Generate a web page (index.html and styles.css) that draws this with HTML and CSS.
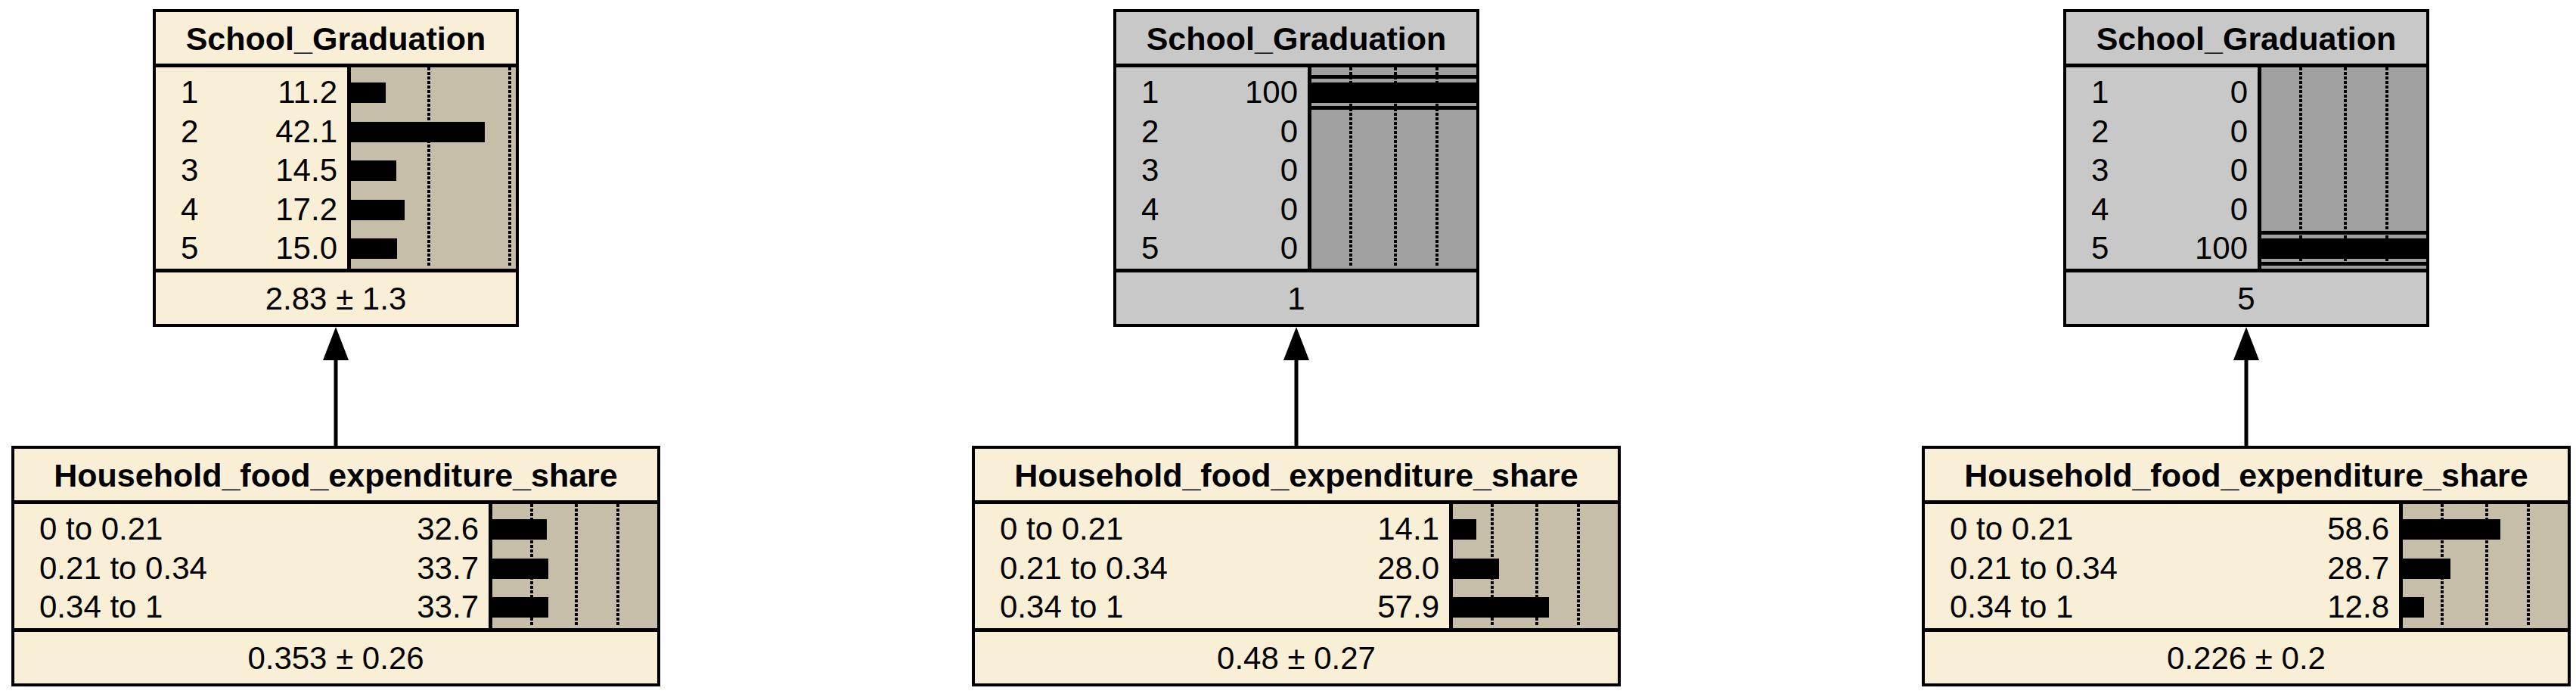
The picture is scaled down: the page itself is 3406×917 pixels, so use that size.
FILE: index.html
```html
<!DOCTYPE html>
<html lang="en">
<head>
<meta charset="utf-8">
<title>Bayesian network – School_Graduation</title>
<link rel="stylesheet" href="styles.css">
</head>
<body>
<div class="net">

  <div class="col col-1">
    <div class="node node-top cream">
      <div class="title">School_Graduation</div>
      <div class="body body-5">
        <div class="states">
          <div class="row"><span>1</span><span>11.2</span></div>
          <div class="row"><span>2</span><span>42.1</span></div>
          <div class="row"><span>3</span><span>14.5</span></div>
          <div class="row"><span>4</span><span>17.2</span></div>
          <div class="row"><span>5</span><span>15.0</span></div>
        </div>
        <div class="bars">
          <div class="tick tick-h1"></div>
          <div class="tick tick-h2"></div>
          <div class="bar-row"><div class="bar" style="width:46px"></div></div>
          <div class="bar-row"><div class="bar" style="width:177px"></div></div>
          <div class="bar-row"><div class="bar" style="width:60px"></div></div>
          <div class="bar-row"><div class="bar" style="width:71px"></div></div>
          <div class="bar-row"><div class="bar" style="width:61px"></div></div>
        </div>
      </div>
      <div class="footer">2.83 ± 1.3</div>
    </div>
    <svg class="arrow" width="40" height="157" viewBox="0 0 40 157"><line x1="20" y1="40" x2="20" y2="157" stroke="#000" stroke-width="5"/><polygon points="20,0 3,44 37,44" fill="#000"/></svg>
    <div class="node node-bottom cream">
      <div class="title">Household_food_expenditure_share</div>
      <div class="body body-3">
        <div class="states">
          <div class="row"><span>0 to 0.21</span><span>32.6</span></div>
          <div class="row"><span>0.21 to 0.34</span><span>33.7</span></div>
          <div class="row"><span>0.34 to 1</span><span>33.7</span></div>
        </div>
        <div class="bars">
          <div class="tick tick-1"></div>
          <div class="tick tick-2"></div>
          <div class="tick tick-3"></div>
          <div class="bar-row"><div class="bar" style="width:72px"></div></div>
          <div class="bar-row"><div class="bar" style="width:74px"></div></div>
          <div class="bar-row"><div class="bar" style="width:74px"></div></div>
        </div>
      </div>
      <div class="footer">0.353 ± 0.26</div>
    </div>
  </div>

  <div class="col col-2">
    <div class="node node-top grey">
      <div class="title">School_Graduation</div>
      <div class="body body-5">
        <div class="states">
          <div class="row"><span>1</span><span>100</span></div>
          <div class="row"><span>2</span><span>0</span></div>
          <div class="row"><span>3</span><span>0</span></div>
          <div class="row"><span>4</span><span>0</span></div>
          <div class="row"><span>5</span><span>0</span></div>
        </div>
        <div class="bars">
          <div class="tick tick-1"></div>
          <div class="tick tick-2"></div>
          <div class="tick tick-3"></div>
          <div class="bar-row"><div class="bar full"></div></div>
          <div class="bar-row"></div>
          <div class="bar-row"></div>
          <div class="bar-row"></div>
          <div class="bar-row"></div>
        </div>
      </div>
      <div class="footer">1</div>
    </div>
    <svg class="arrow" width="40" height="157" viewBox="0 0 40 157"><line x1="20" y1="40" x2="20" y2="157" stroke="#000" stroke-width="5"/><polygon points="20,0 3,44 37,44" fill="#000"/></svg>
    <div class="node node-bottom cream">
      <div class="title">Household_food_expenditure_share</div>
      <div class="body body-3">
        <div class="states">
          <div class="row"><span>0 to 0.21</span><span>14.1</span></div>
          <div class="row"><span>0.21 to 0.34</span><span>28.0</span></div>
          <div class="row"><span>0.34 to 1</span><span>57.9</span></div>
        </div>
        <div class="bars">
          <div class="tick tick-1"></div>
          <div class="tick tick-2"></div>
          <div class="tick tick-3"></div>
          <div class="bar-row"><div class="bar" style="width:31px"></div></div>
          <div class="bar-row"><div class="bar" style="width:61px"></div></div>
          <div class="bar-row"><div class="bar" style="width:127px"></div></div>
        </div>
      </div>
      <div class="footer">0.48 ± 0.27</div>
    </div>
  </div>

  <div class="col col-3">
    <div class="node node-top grey">
      <div class="title">School_Graduation</div>
      <div class="body body-5">
        <div class="states">
          <div class="row"><span>1</span><span>0</span></div>
          <div class="row"><span>2</span><span>0</span></div>
          <div class="row"><span>3</span><span>0</span></div>
          <div class="row"><span>4</span><span>0</span></div>
          <div class="row"><span>5</span><span>100</span></div>
        </div>
        <div class="bars">
          <div class="tick tick-1"></div>
          <div class="tick tick-2"></div>
          <div class="tick tick-3"></div>
          <div class="bar-row"></div>
          <div class="bar-row"></div>
          <div class="bar-row"></div>
          <div class="bar-row"></div>
          <div class="bar-row"><div class="bar full"></div></div>
        </div>
      </div>
      <div class="footer">5</div>
    </div>
    <svg class="arrow" width="40" height="157" viewBox="0 0 40 157"><line x1="20" y1="40" x2="20" y2="157" stroke="#000" stroke-width="5"/><polygon points="20,0 3,44 37,44" fill="#000"/></svg>
    <div class="node node-bottom cream">
      <div class="title">Household_food_expenditure_share</div>
      <div class="body body-3">
        <div class="states">
          <div class="row"><span>0 to 0.21</span><span>58.6</span></div>
          <div class="row"><span>0.21 to 0.34</span><span>28.7</span></div>
          <div class="row"><span>0.34 to 1</span><span>12.8</span></div>
        </div>
        <div class="bars">
          <div class="tick tick-1"></div>
          <div class="tick tick-2"></div>
          <div class="tick tick-3"></div>
          <div class="bar-row"><div class="bar" style="width:129px"></div></div>
          <div class="bar-row"><div class="bar" style="width:63px"></div></div>
          <div class="bar-row"><div class="bar" style="width:28px"></div></div>
        </div>
      </div>
      <div class="footer">0.226 ± 0.2</div>
    </div>
  </div>

</div>
</body>
</html>
```

FILE: styles.css
```css
* {
  box-sizing: border-box;
}

html,
body {
  margin: 0;
  padding: 0;
  background: #ffffff;
}

body {
  font-family: "Liberation Sans", Arial, sans-serif;
  color: #000000;
}

.net {
  display: flex;
  align-items: flex-start;
  width: 3406px;
  height: 917px;
  padding-top: 12px;
}

.col {
  width: 858px;
  flex: none;
  display: flex;
  flex-direction: column;
  align-items: center;
}

.col-1 {
  margin-left: 15px;
}

.col-2 {
  margin-left: 412px;
}

.col-3 {
  margin-left: 398px;
}

.cream {
  --bg: #f8efd6;
  --bar-bg: #c6bea9;
}

.grey {
  --bg: #c8c8c8;
  --bar-bg: #a0a0a0;
}

.node {
  border: 4px solid #000000;
  background: var(--bg);
}

.node-top {
  width: 484px;
}

.node-bottom {
  width: 858px;
}

.title {
  height: 73px;
  line-height: 70px;
  border-bottom: 5px solid #000000;
  text-align: center;
  font-size: 43px;
  font-weight: bold;
  white-space: nowrap;
}

.body {
  display: flex;
  border-bottom: 5px solid #000000;
}

.body-5 {
  height: 271px;
}

.body-3 {
  height: 169px;
}

.states {
  flex: 1;
  padding: 4px 13px 0 33px;
}

.row {
  display: flex;
  justify-content: space-between;
  height: 51.5px;
  line-height: 58px;
  font-size: 42px;
  white-space: nowrap;
}

.bars {
  position: relative;
  width: 223px;
  flex: none;
  border-left: 5px solid #000000;
  background: var(--bar-bg);
  padding-top: 4px;
}

.tick {
  position: absolute;
  top: 0;
  bottom: 3px;
  width: 4px;
  background: repeating-linear-gradient(to bottom, #000000 0 4px, transparent 4px 6px);
}

.tick-1 {
  left: 50px;
}

.tick-2 {
  left: 109px;
}

.tick-3 {
  left: 164px;
}

.tick-h1 {
  left: 101px;
}

.tick-h2 {
  left: 208px;
}

.bar-row {
  position: relative;
  height: 51.5px;
}

.bar {
  position: absolute;
  left: 0;
  top: 16px;
  height: 27px;
  background: #000000;
}

.bar.full {
  width: 100%;
}

.bar.full::before,
.bar.full::after {
  content: "";
  position: absolute;
  left: 0;
  right: 0;
  height: 5px;
  background: #000000;
}

.bar.full::before {
  top: -10px;
}

.bar.full::after {
  top: 31px;
}

.footer {
  height: 68px;
  line-height: 70px;
  text-align: center;
  font-size: 42px;
  white-space: nowrap;
}

.arrow {
  display: block;
  flex: none;
}
```
